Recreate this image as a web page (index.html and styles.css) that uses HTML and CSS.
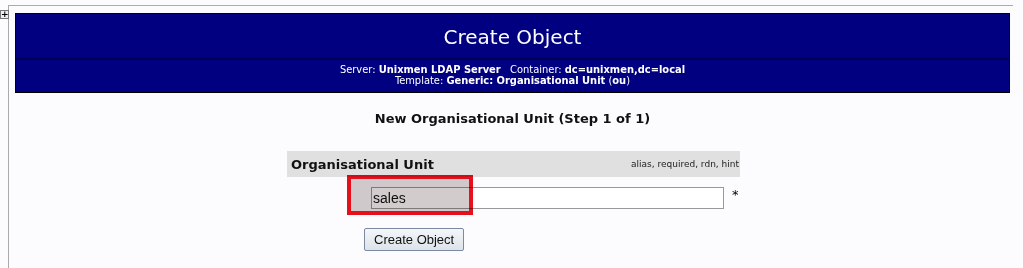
FILE: index.html
```html
<!DOCTYPE html>
<html>
    <head>
        <title>Create Object</title>
        <link rel="stylesheet" href="styles.css">
    </head>
    <body>
        <div class="toggle">+</div>
        <div class="frame">
            <div class="title-bar">
                <div class="title">Create Object</div>
                <div class="subtitle">
                    Server: <b>Unixmen LDAP Server</b>&nbsp;&nbsp; Container: <b>dc=unixmen,dc=local</b><br>
                    Template: <b>Generic: Organisational Unit</b> (<b>ou</b>)
                </div>
            </div>

            <h3 class="step">New Organisational Unit (Step 1 of 1)</h3>

            <div class="form">
                <div class="attr-head">
                    <span class="attr-name">Organisational Unit</span>
                    <span class="attr-hint">alias, required, rdn, hint</span>
                </div>
                <div class="attr-row">
                    <div class="input-wrap">
                        <input type="text" class="value" value="sales">
                        <div class="mark"></div>
                    </div>
                    <span class="req">*</span>
                </div>
                <div class="submit-row">
                    <button>Create Object</button>
                </div>
            </div>
        </div>
        <div class="footer">
            <span class="version">1.2.2</span>
        </div>
    </body>
</html>
```

FILE: styles.css
```css
body {
    margin: 0;
    background-color: #fcfcfe;
    font-family: "DejaVu Sans", Verdana, sans-serif;
    overflow: hidden;
}

.toggle {
    position: absolute;
    left: 0;
    top: 10px;
    width: 7px;
    height: 7px;
    border: 1px solid #777;
    background: #eee;
    font-size: 9px;
    line-height: 7px;
    text-align: center;
    font-weight: bold;
    color: #000;
}

.frame {
    margin: 5px 10px 0 8px;
    height: 255px;
    border-top: 1px solid #aaa;
    border-left: 1px solid #aaa;
    padding: 7px 3px 0 6px;
}

.title-bar {
    background-color: #000080;
    border: 1px solid #000;
    color: #fff;
    text-align: center;
}

.title {
    height: 44px;
    line-height: 46px;
    font-size: 20px;
    border-bottom: 2px solid #000055;
}

.subtitle {
    font-family: "DejaVu Sans Condensed", "DejaVu Sans", sans-serif;
    font-size: 11px;
    line-height: 11px;
    padding: 4px 0 6px;
}

.step {
    margin: 18px 0 0;
    text-align: center;
    font-size: 13px;
    color: #111;
}

.form {
    width: 453px;
    margin: 25px auto 0;
    padding-left: 2px;
}

.attr-head {
    display: flex;
    justify-content: space-between;
    align-items: center;
    height: 26px;
    background-color: #e0e0e0;
    padding: 0 1px 0 4px;
}

.attr-name {
    font-size: 13px;
    font-weight: bold;
    color: #111;
}

.attr-hint {
    font-size: 9px;
    color: #222;
}

.attr-row {
    display: flex;
    align-items: flex-start;
    padding: 10px 0 0 84px;
}

.input-wrap {
    position: relative;
}

.value {
    display: block;
    width: 353px;
    height: 22px;
    box-sizing: border-box;
    border: 1px solid #999;
    padding: 0 1px;
    font-family: "Liberation Sans", Arial, sans-serif;
    font-size: 14px;
    background: #fff;
    color: #111;
}

.mark {
    position: absolute;
    left: -24px;
    top: -12px;
    width: 118px;
    height: 32px;
    border: 4px solid #e8101c;
    background: #d2cccc;
    mix-blend-mode: multiply;
}

.req {
    margin-left: 8px;
    font-size: 13px;
    color: #000;
}

.submit-row {
    padding: 19px 0 0 77px;
}

button {
    font-family: "Liberation Sans", Arial, sans-serif;
    font-size: 13px;
    padding: 3px 9px;
    border: 1px solid #7a8aa0;
    border-radius: 2px;
    background: linear-gradient(#f4f6f9, #dde3ea);
    color: #111;
}

.footer {
    border-top: 2px solid #aaa;
    text-align: right;
    padding: 2px 12px 0 0;
}

.version {
    display: block;
    font-size: 13px;
    font-weight: bold;
    line-height: 14px;
}
```
